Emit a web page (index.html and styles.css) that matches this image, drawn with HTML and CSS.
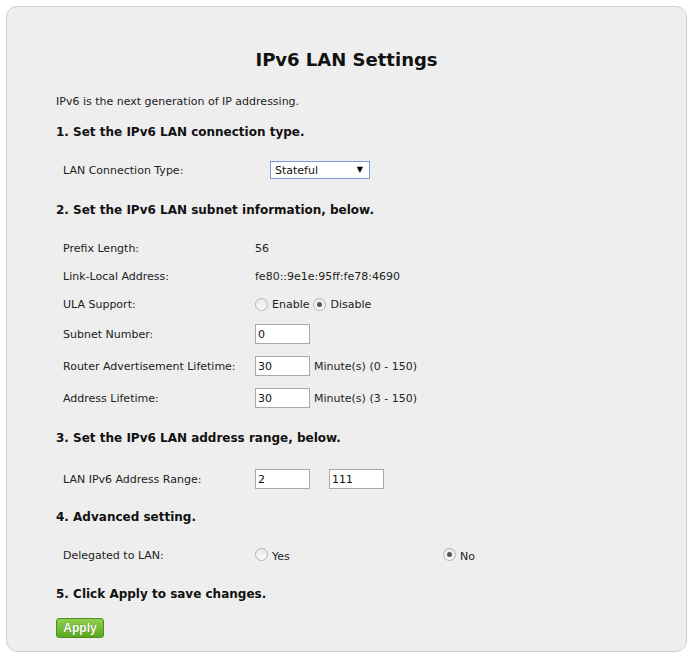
FILE: index.html
```html
<!DOCTYPE html>
<html lang="en">
<head>
  <meta charset="UTF-8" />
  <title>IPv6 LAN Settings</title>
  <link rel="stylesheet" href="styles.css">
</head>
<body>
  <div class="panel">
    <h1>IPv6 LAN Settings</h1>
    <p class="intro">IPv6 is the next generation of IP addressing.</p>

    <h2 class="step">1. Set the IPv6 LAN connection type.</h2>
    <div class="row">
      <span class="label">LAN Connection Type:</span>
      <span class="select-wrap">
        <select class="select">
          <option>Stateful</option>
          <option>Stateless</option>
        </select>
      </span>
    </div>

    <h2 class="step">2. Set the IPv6 LAN subnet information, below.</h2>
    <div class="row">
      <span class="label">Prefix Length:</span>
      <span class="value">56</span>
    </div>
    <div class="row row-tight">
      <span class="label">Link-Local Address:</span>
      <span class="value">fe80::9e1e:95ff:fe78:4690</span>
    </div>
    <div class="row row-tight">
      <span class="label">ULA Support:</span>
      <span class="value">
        <label class="radio"><input type="radio" name="ula"> Enable</label>
        <label class="radio"><input type="radio" name="ula" checked> Disable</label>
      </span>
    </div>
    <div class="row row-input">
      <span class="label">Subnet Number:</span>
      <span class="value"><input class="field" type="text" value="0"></span>
    </div>
    <div class="row row-input">
      <span class="label">Router Advertisement Lifetime:</span>
      <span class="value"><input class="field" type="text" value="30"> Minute(s) (0 - 150)</span>
    </div>
    <div class="row row-input">
      <span class="label">Address Lifetime:</span>
      <span class="value"><input class="field" type="text" value="30"> Minute(s) (3 - 150)</span>
    </div>

    <h2 class="step">3. Set the IPv6 LAN address range, below.</h2>
    <div class="row row-range">
      <span class="label">LAN IPv6 Address Range:</span>
      <span class="value range">
        <input class="field" type="text" value="2">
        <input class="field" type="text" value="111">
      </span>
    </div>

    <h2 class="step">4. Advanced setting.</h2>
    <div class="row row-deleg">
      <span class="label">Delegated to LAN:</span>
      <span class="value split">
        <label class="radio low"><input type="radio" name="deleg"> Yes</label>
        <label class="radio low"><input type="radio" name="deleg" checked> No</label>
      </span>
    </div>

    <h2 class="step">5. Click Apply to save changes.</h2>
    <button class="apply" type="button">Apply</button>
  </div>
</body>
</html>
```

FILE: styles.css
```css
* {
  box-sizing: border-box;
}
body {
  margin: 0;
  background: #fff;
  font-family: "DejaVu Sans", Verdana, sans-serif;
  color: #222;
}
.panel {
  margin: 6px 7px 0 6px;
  height: 646px;
  background: #eeeeee;
  border: 1px solid #d0d0d0;
  border-radius: 11px;
  padding: 41px 49px 0 49px;
}
h1 {
  margin: 0;
  font-size: 18px;
  line-height: 24px;
  text-align: center;
  color: #111;
}
.intro {
  margin: 22px 0 0;
  font-size: 11px;
  line-height: 16px;
}
.step {
  margin: 13px 0 0;
  font-size: 12px;
  line-height: 18px;
  color: #111;
}
.row + .step {
  margin-top: 21px;
}
.row-range + .step {
  margin-top: 19px;
}
.row-deleg + .step {
  margin-top: 20px;
}
.row {
  display: flex;
  align-items: center;
  height: 20px;
  padding-left: 7px;
  font-size: 11px;
}
.step + .row {
  margin-top: 19px;
}
.step + .row-range {
  margin-top: 22px;
}
.row-tight {
  margin-top: 8px;
}
.row-input {
  margin-top: 10px;
}
.row-input + .row-input {
  margin-top: 12px;
}
.label {
  width: 192px;
  flex: none;
}
.value {
  display: flex;
  align-items: center;
  gap: 4px;
}
.range {
  gap: 19px;
}
.split {
  width: 220px;
  justify-content: space-between;
}
.select-wrap {
  position: relative;
  margin-left: 15px;
}
.select-wrap::after {
  content: "\25BC";
  position: absolute;
  right: 7px;
  top: 4px;
  font-size: 8px;
  color: #000;
  pointer-events: none;
}
.select {
  appearance: none;
  width: 100px;
  height: 18px;
  border: 1px solid #7a9cd3;
  background: #fff;
  font-family: inherit;
  font-size: 11px;
  padding: 0 4px;
  color: #111;
}
.field {
  width: 55px;
  height: 20px;
  border: 1px solid #a9a9a9;
  background: #fff;
  font-family: inherit;
  font-size: 11px;
  padding: 0 2px;
  color: #111;
}
.radio {
  display: inline-flex;
  align-items: center;
  gap: 3px;
}
.radio.low {
  align-items: flex-start;
}
.radio.low input {
  margin-top: -2px;
}
.radio.low span,
.radio.low {
  padding-top: 2px;
}
.radio input {
  appearance: none;
  width: 13px;
  height: 13px;
  margin: 0 1px 0 0;
  border-radius: 50%;
  border: 1px solid #b5b5b5;
  background: linear-gradient(#e8e8e8, #fafafa);
  position: relative;
}
.radio input:checked::after {
  content: "";
  position: absolute;
  left: 3px;
  top: 3px;
  width: 5px;
  height: 5px;
  border-radius: 50%;
  background: #555;
}
.apply {
  margin-top: 15px;
  width: 48px;
  height: 20px;
  border: 1px solid #4f8f1c;
  border-radius: 3px;
  background: linear-gradient(#8fd14f, #5aa81f);
  color: #fff;
  font-family: "Liberation Sans", Arial, sans-serif;
  font-weight: bold;
  font-size: 12px;
  padding: 0;
  text-shadow: 0 0 1px #3c6d13;
}
```
